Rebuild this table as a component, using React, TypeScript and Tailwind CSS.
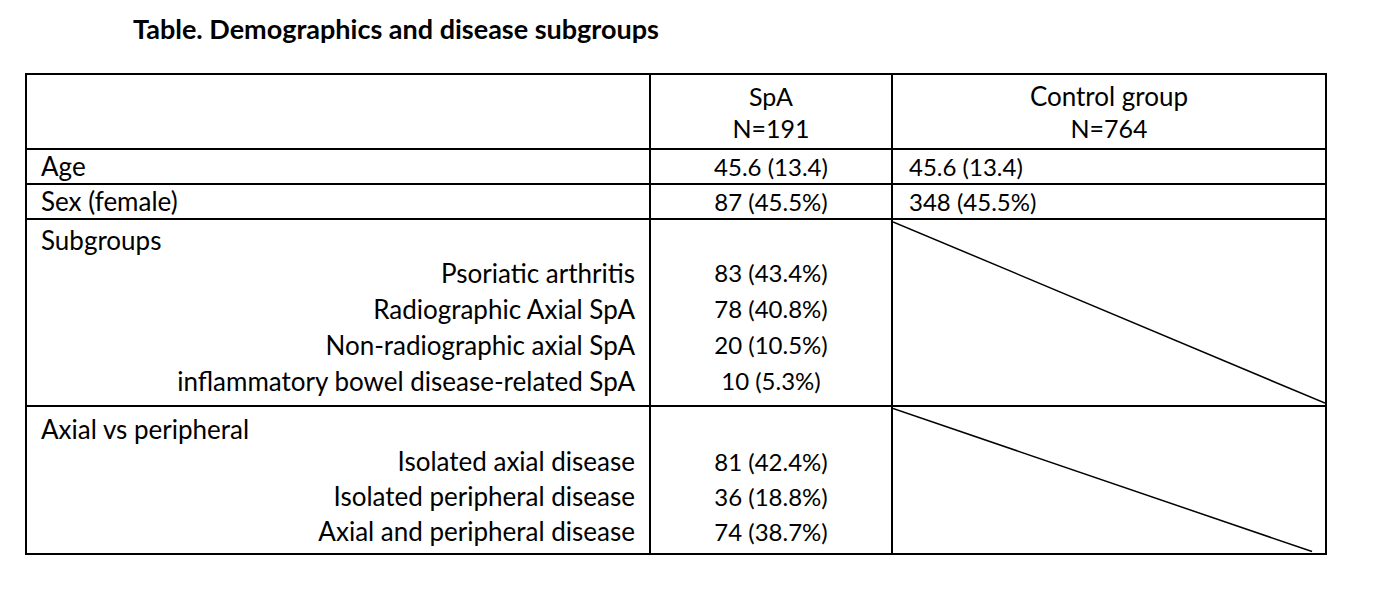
const subgroups = [
  ['Psoriatic arthritis', '83 (43.4%)'],
  ['Radiographic Axial SpA', '78 (40.8%)'],
  ['Non-radiographic axial SpA', '20 (10.5%)'],
  ['inflammatory bowel disease-related SpA', '10 (5.3%)'],
];

const axial = [
  ['Isolated axial disease', '81 (42.4%)'],
  ['Isolated peripheral disease', '36 (18.8%)'],
  ['Axial and peripheral disease', '74 (38.7%)'],
];

function Diagonal({ shortEnd }: { shortEnd?: boolean }) {
  return (
    <svg className="absolute inset-0 h-full w-full" viewBox="0 0 100 100" preserveAspectRatio="none">
      <line
        x1="0"
        y1="1"
        x2={shortEnd ? 97 : 100}
        y2="99"
        stroke="black"
        strokeWidth="1.5"
        vectorEffect="non-scaling-stroke"
      />
    </svg>
  );
}

function Section({ title, rows, wide }: { title: string; rows: string[][]; wide?: boolean }) {
  const line = wide ? 'h-[36px] leading-[36px]' : 'h-[35px] leading-[35px]';
  const pad = wide ? 'pt-[5px] pb-[6px]' : 'pt-[7px] pb-[4px]';
  return (
    <tr>
      <td className={`border-2 border-black px-[14px] align-top ${pad}`}>
        <div className="h-[30px] leading-[30px]">{title}</div>
        {rows.map(([label]) => (
          <div key={label} className={`text-right ${line}`}>
            {label}
          </div>
        ))}
      </td>
      <td className={`border-2 border-black text-center align-top text-[24px] ${pad}`}>
        <div className="h-[30px]" />
        {rows.map(([label, value]) => (
          <div key={label} className={line}>
            {value}
          </div>
        ))}
      </td>
      <td className="relative border-2 border-black p-0">
        <Diagonal shortEnd={!wide} />
      </td>
    </tr>
  );
}

export default function App() {
  return (
    <div
      className="h-[598px] w-[1392px] bg-white text-black"
      style={{ fontFamily: 'Lato, "Open Sans", sans-serif' }}
    >
      <h1 className="pt-[13px] pl-[133px] text-[27px] leading-[32px] font-bold">
        Table. Demographics and disease subgroups
      </h1>
      <table className="mt-[28px] ml-[25px] w-[1300px] table-fixed border-collapse text-[26px]">
        <colgroup>
          <col className="w-[624px]" />
          <col className="w-[242px]" />
          <col className="w-[434px]" />
        </colgroup>
        <tbody>
          <tr className="h-[75px]">
            <td className="border-2 border-black" />
            <td className="border-2 border-black text-center text-[25px] leading-[32px]">
              <div>SpA</div>
              <div>N=191</div>
            </td>
            <td className="border-2 border-black text-center leading-[32px]">
              <div>Control group</div>
              <div className="text-[25px]">N=764</div>
            </td>
          </tr>
          <tr className="h-[35px]">
            <td className="border-2 border-black px-[14px] leading-[31px]">Age</td>
            <td className="border-2 border-black text-center text-[24px] leading-[31px]">45.6 (13.4)</td>
            <td className="border-2 border-black px-[16px] text-[24px] leading-[31px]">45.6 (13.4)</td>
          </tr>
          <tr className="h-[35px]">
            <td className="border-2 border-black px-[14px] leading-[31px]">Sex (female)</td>
            <td className="border-2 border-black text-center text-[24px] leading-[31px]">87 (45.5%)</td>
            <td className="border-2 border-black px-[16px] text-[24px] leading-[31px]">348 (45.5%)</td>
          </tr>
          <Section title="Subgroups" rows={subgroups} wide />
          <Section title="Axial vs peripheral" rows={axial} />
        </tbody>
      </table>
    </div>
  );
}
